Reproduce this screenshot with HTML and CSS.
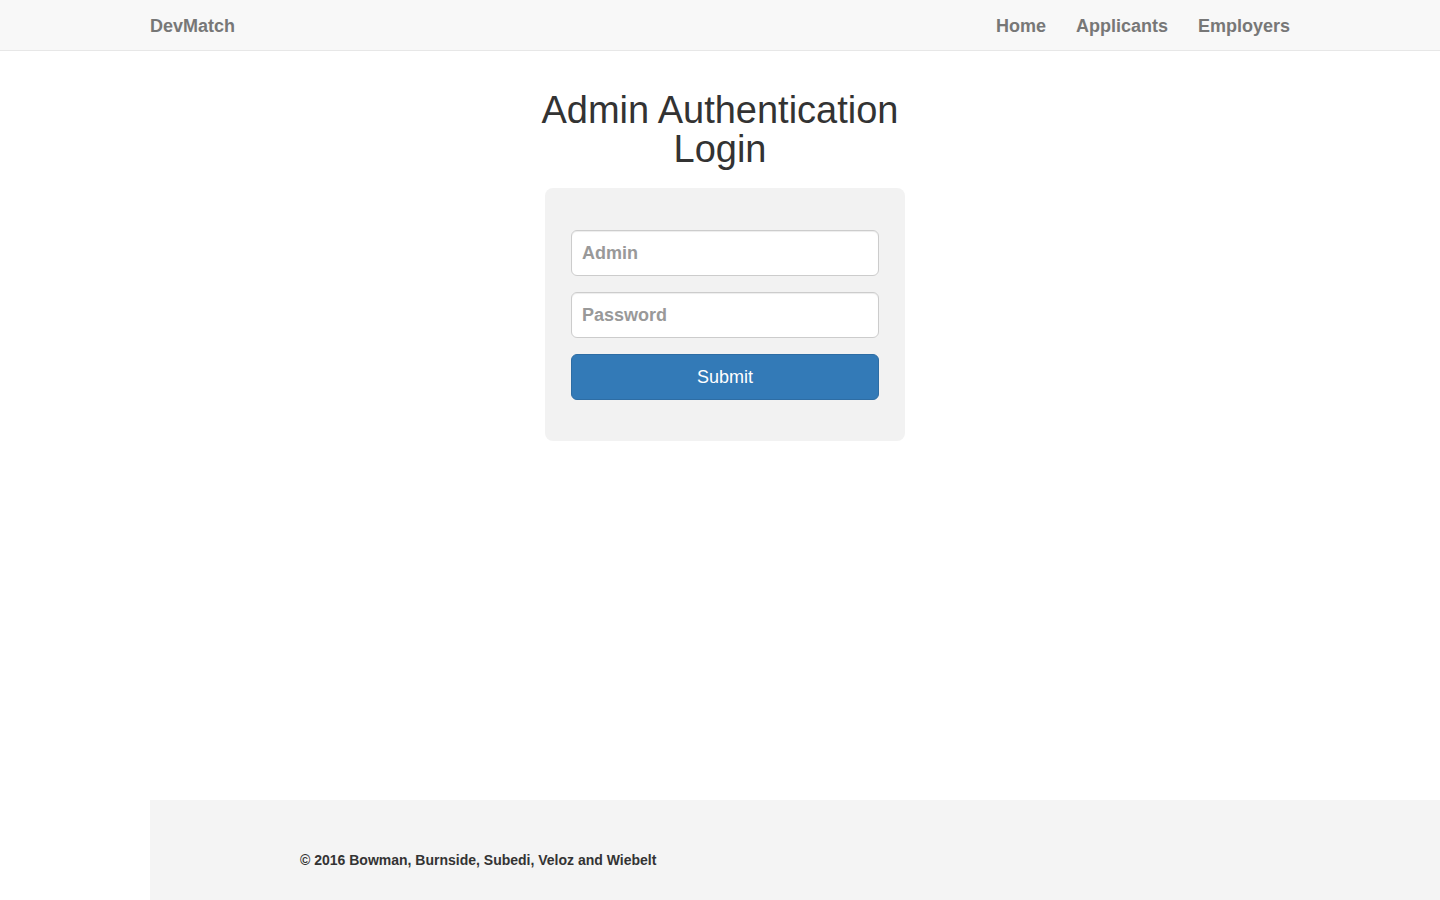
FILE: index.html
```html
<!DOCTYPE html>
<html lang="en">
<head>
<meta charset="utf-8">
<title>DevMatch - Admin Login</title>
<link rel="stylesheet" href="styles.css">
</head>
<body>
<div class="page">
  <nav class="navbar">
    <div class="container nav-inner">
      <a class="brand" href="#">DevMatch</a>
      <ul class="nav-links">
        <li><a href="#">Home</a></li>
        <li><a href="#">Applicants</a></li>
        <li><a href="#">Employers</a></li>
      </ul>
    </div>
  </nav>
  <main class="main">
    <div class="login-col">
      <h1 class="title">Admin Authentication Login</h1>
      <form class="login-box">
        <input class="field" type="text" placeholder="Admin">
        <input class="field" type="password" placeholder="Password">
        <button class="submit" type="button">Submit</button>
      </form>
    </div>
  </main>
  <footer class="footer">
    <p class="copy">© 2016 Bowman, Burnside, Subedi, Veloz and Wiebelt</p>
  </footer>
</div>
</body>
</html>
```

FILE: styles.css
```css
* { box-sizing: border-box; }
html, body { margin: 0; padding: 0; }
body {
  font-family: "Liberation Sans", Arial, sans-serif;
  font-size: 14px;
  color: #333;
  background: #fff;
}
.page {
  min-height: 100vh;
  display: flex;
  flex-direction: column;
}
.navbar {
  height: 51px;
  background: #f8f8f8;
  border-bottom: 1px solid #e7e7e7;
}
.container {
  width: 1170px;
  margin: 0 auto;
  padding: 0 15px;
}
.nav-inner {
  display: flex;
  justify-content: space-between;
  align-items: center;
  height: 50px;
  padding-top: 2px;
}
.brand {
  font-size: 18px;
  font-weight: bold;
  color: #777;
  text-decoration: none;
  line-height: 20px;
}
.nav-links {
  display: flex;
  list-style: none;
  margin: 0;
  padding: 0;
  gap: 30px;
}
.nav-links a {
  font-size: 18px;
  font-weight: bold;
  color: #777;
  text-decoration: none;
  line-height: 20px;
}
.main {
  flex: 1;
  display: flex;
  justify-content: center;
}
.login-col {
  width: 370px;
  margin-left: 10px;
  display: flex;
  flex-direction: column;
  align-items: center;
}
.title {
  width: 370px;
  margin: 40px 10px 19px 0;
  font-size: 38px;
  font-weight: normal;
  line-height: 39px;
  text-align: center;
  color: #333;
}
.login-box {
  width: 360px;
  background: #f2f2f2;
  border-radius: 8px;
  padding: 42px 26px 41px;
  display: flex;
  flex-direction: column;
  gap: 16px;
}
.field {
  height: 46px;
  width: 100%;
  border: 1px solid #ccc;
  border-radius: 6px;
  background: #fff;
  padding: 0 10px;
  font-family: "Liberation Sans", Arial, sans-serif;
  font-size: 18px;
  font-weight: bold;
  color: #555;
  box-shadow: inset 0 1px 1px rgba(0,0,0,0.075);
}
.field::placeholder { color: #999; }
.submit {
  height: 46px;
  width: 100%;
  border: 1px solid #2e6da4;
  border-radius: 6px;
  background: #337ab7;
  color: #fff;
  font-family: "Liberation Sans", Arial, sans-serif;
  font-size: 18px;
  padding-top: 1px;
}
.footer {
  height: 100px;
  margin-left: 150px;
  background: #f4f4f4;
  padding: 50px 0 0 150px;
}
.copy {
  margin: 0;
  font-size: 14px;
  font-weight: bold;
  line-height: 20px;
  color: #333;
}
```
